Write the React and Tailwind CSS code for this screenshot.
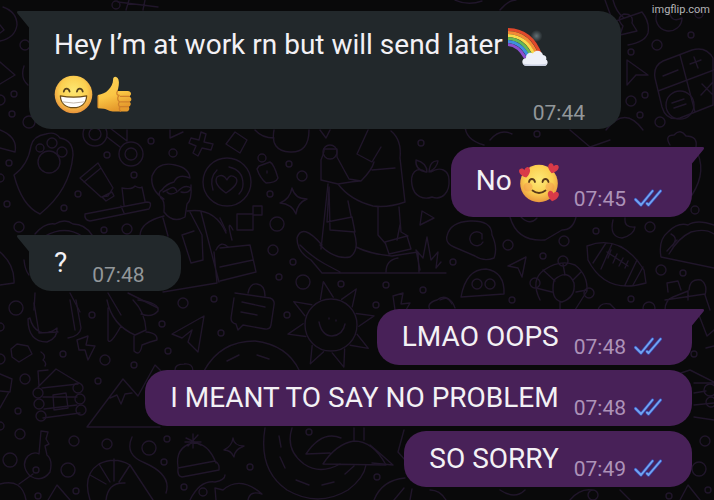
import React from 'react';
import clsx from 'clsx';

const GrinEmoji = () => (
  <svg viewBox="0 0 40 40" className="inline-block w-[39px] h-[39px] align-middle" role="img" aria-label="Grinning face">
    <defs>
      <radialGradient id="grin-face" cx="0.5" cy="0.4" r="0.6">
        <stop offset="0" stopColor="#fde873" />
        <stop offset="0.6" stopColor="#fbcf50" />
        <stop offset="1" stopColor="#e8923a" />
      </radialGradient>
    </defs>
    <circle cx="20" cy="20" r="19.3" fill="url(#grin-face)" />
    <path d="M10 17c.8-4.2 5-4.2 6 0M23.500 17c.8-4.200 5-4.200 6 0" fill="none" stroke="#54401c" strokeWidth="1.8" strokeLinecap="round" />
    <path d="M6.500 21.500Q20 24 33.500 21.500C33 29.500 27.500 33.500 20 33.500S7 29.500 6.500 21.500Z" fill="#fff" stroke="#6b4c18" strokeWidth="1.300" strokeLinejoin="round" />
    <path d="M8.500 27.500Q20 30 31.500 27.500" fill="none" stroke="#b9ada0" strokeWidth="0.9" />
  </svg>
);

const ThumbEmoji = () => (
  <svg viewBox="0 0 40 40" className="inline-block w-[39px] h-[39px] ml-1 align-middle" role="img" aria-label="Thumbs up">
    <defs>
      <linearGradient id="thumb-skin" x1="0" y1="0" x2="0.3" y2="1">
        <stop offset="0" stopColor="#fcd257" />
        <stop offset="0.6" stopColor="#fbc645" />
        <stop offset="1" stopColor="#e59a2c" />
      </linearGradient>
    </defs>
    <path d="M1 20.500C5 20 9 18.500 11.500 15.500C14.500 12 16.500 9 16.500 4.500C16.500 1 20.500.8 22 4.500C23.200 8 22 13 21 16.500H31.500C35.500 16.500 36 21 33 22C36 23 36 27 33 27.500C35.500 28.500 35 32 32.500 32.500C34 34 33 37.500 30 37.500H18C13 37.500 11 35 7 34.500L1 34Z" fill="url(#thumb-skin)" />
    <path d="M33 22H24M33 27.500H24M32.500 32.500H24M21 16.500C19.500 19 20.500 20.500 22.500 21C20.500 23.500 21 26 23 27.500C21.500 29.500 21.700 31.500 23.500 32.500C22.500 34.500 23 36 24 37" fill="none" stroke="#d0802a" strokeWidth="1.300" strokeLinecap="round" />
    <path d="M1 21V33.500" stroke="#d58a2c" strokeWidth="1.200" />
  </svg>
);

const RainbowEmoji = () => (
  <svg viewBox="0 0 40 40" className="inline-block w-10 h-10 -ml-0.5 align-middle" role="img" aria-label="Rainbow">
    <defs>
      <radialGradient id="rainbow-sun">
        <stop offset="0" stopColor="#8fa0a6" stopOpacity="0.6" />
        <stop offset="1" stopColor="#8fa0a6" stopOpacity="0" />
      </radialGradient>
    </defs>
    <circle cx="28.500" cy="9" r="6" fill="url(#rainbow-sun)" />
    <g fill="none" strokeWidth="3.2">
      <path d="M0 2.500C16 3 27 12 32.500 28" stroke="#e0482b" />
      <path d="M0 5.500C14 6 24 14 29.500 29" stroke="#f48a35" />
      <path d="M0 8.500C12 9 21.500 16 26.500 29" stroke="#f9d94c" />
      <path d="M0 11.500C10 12 18.500 18 23.500 30" stroke="#67b854" />
      <path d="M0 14.500C9 15 15.500 20 20.500 30" stroke="#3f8fe0" />
      <path d="M0 17.500C7 18 13 23 17.500 31" stroke="#8b4fd0" />
    </g>
    <path d="M18.500 39C13 38.500 13 31.500 18 31C18 26 22.500 25 25 26.500C27 22 34 23 35 28C39 28.500 38.500 32 38 32.500C41 34.500 39.500 39 36 39Z" fill="#eef0f8" />
    <path d="M15 36.500Q16 39 18.500 39H36Q38.500 39 39 36.500Q35 37.500 27 37.500T15 36.500Z" fill="#c9cfe0" />
  </svg>
);

const heart = 'M0 5C-7 1-6-4.500-3-4.500C-1.300-4.500-.3-3.500 0-2.300C.5-3.500 1.500-4.500 3-4.500C6-4.500 7 1 0 5Z';

const LoveEmoji = () => (
  <svg viewBox="0 0 40 40" className="inline-block w-10 h-10 align-middle" role="img" aria-label="Smiling face with hearts">
    <defs>
      <radialGradient id="love-face" cx="0.5" cy="0.4" r="0.6">
        <stop offset="0" stopColor="#fdea78" />
        <stop offset="0.6" stopColor="#fbd052" />
        <stop offset="1" stopColor="#e9983e" />
      </radialGradient>
    </defs>
    <circle cx="20" cy="20.500" r="18.800" fill="url(#love-face)" />
    <circle cx="9" cy="24" r="4.500" fill="#f2814a" opacity="0.35" />
    <circle cx="31" cy="24" r="4.500" fill="#f2814a" opacity="0.35" />
    <path d="M10 19c.8-4 5-4 6 0M23.500 19c.8-4 5-4 6 0M13.500 27.500Q20 32.500 26.500 27.500" fill="none" stroke="#5a3a1a" strokeWidth="1.800" strokeLinecap="round" />
    <g fill="#d93a48">
      <path d={heart} transform="translate(6 9.500) rotate(-14) scale(1.050)" />
      <path d={heart} transform="translate(34 5.500) rotate(16)" />
      <path d={heart} transform="translate(34 33) rotate(10) scale(1.050)" />
    </g>
  </svg>
);

const Ticks = () => (
  <svg viewBox="0 0 28 18" className="w-7 h-[18px] mb-1" role="img" aria-label="Read">
    <g fill="none" strokeLinecap="round" strokeLinejoin="round">
      <path d="M1.500 10.500L7 16L18.500 2M13 14.500L14.500 16L26.500 2" stroke="#3a4bb0" strokeWidth="3.200" />
      <path d="M1.500 10.500L7 16L18.500 2M13 14.500L14.500 16L26.500 2" stroke="#72a5f2" strokeWidth="1.900" />
    </g>
  </svg>
);

// [cx, cy, r]
const dots = [
  [116, 5, 4], [25, 45, 5], [14, 94, 3], [0, 100, 5], [12, 114, 3], [29, 122, 6], [9, 163, 3], [0, 178, 4],
  [151, 141, 3], [107, 155, 3], [173, 153, 4], [134, 175, 3], [78, 194, 3], [64, 208, 3], [7, 204, 3],
  [19, 227, 5], [104, 230, 3], [127, 229, 5], [183, 303, 5], [214, 299, 3], [289, 164, 3], [302, 176, 5],
  [270, 194, 3], [277, 224, 7], [273, 250, 5], [293, 262, 3], [279, 277, 3], [303, 282, 7], [341, 284, 3],
  [386, 285, 3], [423, 290, 3], [376, 305, 3], [421, 143, 3], [453, 262, 3], [508, 245, 5], [543, 256, 3],
  [564, 241, 5], [596, 231, 3], [650, 227, 5], [661, 270, 5], [683, 273, 3], [512, 300, 3], [631, 299, 3],
  [649, 308, 6], [631, 52, 3], [657, 45, 5], [691, 35, 3], [699, 14, 4], [631, 101, 5], [645, 95, 3],
  [660, 122, 5], [640, 115, 3], [537, 134, 3], [695, 210, 4], [16, 308, 7], [0, 327, 4], [92, 315, 3],
  [162, 324, 3], [168, 351, 3], [221, 333, 3], [63, 354, 3], [105, 360, 5], [134, 365, 3],
  [25, 379, 5], [0, 359, 5], [98, 381, 3], [18, 411, 3], [0, 426, 4], [20, 434, 5], [10, 460, 7],
  [74, 441, 5], [107, 444, 5], [68, 470, 7], [149, 448, 7], [167, 439, 3], [164, 462, 3], [76, 491, 3],
  [38, 496, 3], [184, 487, 3], [203, 492, 4], [250, 467, 3], [309, 432, 3], [377, 477, 3], [287, 315, 3],
  [694, 354, 3], [705, 441, 5], [699, 469, 7], [708, 490, 3], [593, 495, 5], [669, 496, 3],
];

const sunRays = [-10, 35, 78, 122, 163, 208, 258, 302];

const Wallpaper = () => (
  <svg
    viewBox="0 0 714 500"
    preserveAspectRatio="xMidYMin slice"
    className="absolute inset-0 w-full h-full"
    fill="none"
    stroke="#20162a"
    strokeWidth="1.400"
    strokeLinecap="round"
    strokeLinejoin="round"
    aria-hidden="true"
  >
    {dots.map(([cx, cy, r], i) => (
      <circle key={i} cx={cx} cy={cy} r={r} />
    ))}

    {/* top edge and left border */}
    <path d="M3 7Q17 12 17 25Q15 38 0 41M0 25L4 30L0 33M0 62L15 75L0 84M24 66Q20 78 28 85M0 130Q18 137 15 152L0 148" />
    <path d="M129 0L126 10M145 0L143 10M118 2L158 7M500 10Q508 0 516 0M455 0Q468 6 482 1" />
    <path d="M605 0L613 22L642 12Q650 22 648 33Q645 42 628 45M613 0Q616 12 624 18M620 35L623 26Q615 18 624 14Q634 14 632 23L637 31Z" />
    <path d="M657 13A13 13 0 1 0 682 18Q670 24 669 9" />

    {/* cursor and calculator */}
    <path d="M627 60L648 75L636 75L627 85Z" />
    <path d="M663 61L692 50Q706 46 713 58V105L680 118Q666 121 662 107L655 78Q653 66 663 61ZM680 55L695 112M658 91L714 70M663 76L678 70M690 64L701 60M694 57L698 68M702 84L712 94M713 82L701 95M672 103L684 99M674 108L686 104" />
    <circle cx="680" cy="105" r="14" />
    <path d="M606 130Q625 105 643 130M670 145Q664 135 674 135Q680 128 686 136Q698 136 696 147M695 148Q708 170 692 195" />
    <path d="M570 130L590 147L610 140M484 145Q465 140 465 125M490 140Q500 128 512 134" />

    {/* paw guitar pick, reel, toothpaste and brush */}
    <path d="M14 175Q28 165 31 146Q33 136 46 134Q55 131 60 138Q73 140 73 155Q70 190 40 214Q22 206 14 175Z" />
    <circle cx="40" cy="148" r="4" /><circle cx="52" cy="143" r="5" /><circle cx="62" cy="152" r="5" /><circle cx="49" cy="162" r="11" />
    <circle cx="95" cy="134" r="12" /><circle cx="95" cy="134" r="6" />
    <circle cx="131" cy="154" r="12" /><circle cx="131" cy="154" r="6" />
    <path d="M107 137L120 147M110 128L127 141V130M170 130V138L183 132" />
    <path d="M80 178L98 163L113 188L108 196L101 197ZM84 182L101 168M102 197L112 192L114 196L106 201Z" />
    <path d="M85 214L147 202Q153 202 149 209L90 221Q84 220 85 214ZM124 205L122 188Q132 190 135 186Q140 189 142 187L145 201M121 206L124 213" />
    <path d="M201 132L206 134L204 142L213 144L211 150L202 148L198 156L193 153L196 146L189 143L191 138L199 140Z" />
    <path d="M226 144L235 132L247 140L240 153Z" />

    {/* reader with glasses */}
    <path d="M164 199Q150 190 152 176Q158 161 175 165Q189 168 190 178Q178 173 174 182Q166 184 162 190Q157 192 161 198Q165 200 164 212Q173 224 185 217L187 204Q192 200 191 185M163 192L169 189Q175 185 177 192Q170 196 167 192M178 191Q185 184 191 188Q189 194 181 192" />
    <path d="M164 216Q140 222 140 236M187 211Q215 207 226 233M190 212L202 235M163 218L168 236M202 235L203 260L191 263L182 235L194 231M217 283L163 292M217 283L214 252M201 212L219 282M216 250Q221 240 228 247M233 230Q226 217 232 240" />
    <path d="M35 234Q45 222 55 224Q65 218 73 224Q85 224 92 235M45 236Q65 225 82 236M24 260Q25 270 29 275M0 252Q15 265 14 283L0 285M35 293L34 310M70 293L80 312M108 293L121 315M128 293L158 308" />

    {/* coffee, tag, sparkle, blocks */}
    <circle cx="227" cy="182" r="24" />
    <path d="M229 167Q243 170 243 184Q243 190 239 194M217 170Q209 178 213 190M226 193Q213 184 217 177Q223 173 227 180Q230 173 236 178Q240 184 226 193Z" />
    <path d="M259 166L270 162Q274 164 278 178Q276 183 266 183Q260 178 257 169ZM267 171L267 173" />
    <circle cx="262" cy="158" r="4" />
    <path d="M292 188Q295 199 307 199Q297 203 296 214Q292 204 280 203Q290 199 292 188Z" />
    <path d="M237 214H253V230H237ZM253 206H262V215H253ZM255 130Q262 138 274 138M274 130Q270 151 290 152Q309 153 309 130M320 130L326 138L330 130" />
    <path d="M220 248L250 245L256 272L220 281M220 267L253 260M220 218L226 231" />

    {/* hiker */}
    <path d="M368 130L357 154L372 162L381 147M391 131Q402 140 400 158L405 202Q388 208 373 206Q350 200 338 184L321 180V160Q325 150 324 149M324 149H337V157L349 179L361 181Q372 170 374 162M372 170L395 168M338 184Q355 181 361 181M328 184L321 249" />
    <circle cx="330" cy="152" r="7" />
    <path d="M329 187L327 222L352 217L355 232L330 230ZM348 201L351 216M378 207V235L385 243M399 207L401 232L408 236M385 242L407 236L411 249L389 254ZM322 245Q302 222 297 238Q297 252 311 260L322 273H446M320 245Q335 260 350 257Q360 250 354 232M300 245Q312 257 325 264L340 272M356 247Q370 254 392 256M392 256L418 252L419 272M386 272Q386 260 398 258M420 270L416 250L423 258L427 237L431 260L438 252L436 268L441 262" />
    <path d="M426 172C416 165 410 174 412 185C414 197 424 200 432 197C442 201 450 192 449 180C449 170 440 166 431 172M426 172Q415 170 416 160Q427 163 427 172M429 172Q430 160 438 161Q437 168 429 172M422 211L434 218L420 225Z" />

    {/* pear badge, ghost, turtle, football, taco */}
    <path d="M447 236Q450 222 470 221Q492 220 492 235Q498 248 494 258Q484 262 475 256L454 247Q445 243 447 236ZM482 234A7 7 0 1 0 483 242M482 234V239" />
    <path d="M508 266L526 257L522 277L518 268Z" />
    <path d="M461 297Q466 269 486 269Q505 272 504 294Z" />
    <circle cx="477" cy="284" r="5" /><circle cx="490" cy="284" r="5" />
    <path d="M510 217Q517 242 545 240L562 230Q573 230 576 217M521 217Q530 226 537 218" />
    <path d="M540 300Q530 280 544 270Q560 259 575 265Q588 275 587 291L575 310M554 280Q568 268 574 283Q576 297 562 302Q550 300 554 280ZM563 264L565 275M581 272L573 280M587 290L576 292M543 270L555 281M536 288L552 292M560 302V310" />
    <circle cx="563" cy="261" r="5" /><circle cx="535" cy="283" r="5" /><circle cx="589" cy="293" r="5" />
    <path d="M587 246Q621 233 644 270L646 283Q606 295 588 260ZM593 263L606 243M601 269L612 244M625 285L637 260M633 285L643 267M607 252L628 266M611 250L608 258M617 254L613 263M623 258L619 266M628 261L625 268" />
    <path d="M613 220Q609 237 622 238Q634 235 635 227Q624 228 625 218" />
    <path d="M714 268L661 257Q658 240 668 232Q678 222 688 225Q697 219 714 225M669 254Q678 238 691 232Q705 228 714 234M671 234Q679 238 672 246M667 251L677 240M665 310Q665 300 673 297L688 291V300M668 292L667 283L678 281L681 290M689 290Q690 278 701 280Q708 285 705 295L710 310M665 300L705 294" />
    <path d="M400 225L397 240M440 300Q450 294 455 308M598 310Q600 302 610 304L616 310" />

    {/* tank top, banana, rocket, plane */}
    <path d="M34 303L39 333M76 300L81 328Q80 336 68 338M70 300L75 330M39 333L58 332M28 319Q28 342 47 342Q58 338 57 328Q48 335 40 332Q32 328 30 318Z" />
    <path d="M107 300Q112 325 135 335L146 330Q145 312 133 300M108 308L108 340Q110 346 121 326M138 300Q160 303 158 311Q152 318 141 314M134 336L134 351Q140 357 142 345L150 342L157 340Q158 333 146 332" />
    <path d="M172 334L204 316L198 352L188 342L192 330L182 338ZM77 340L88 336L86 345L95 346L88 360L85 350L79 350ZM11 349L17 344L28 346L32 354L19 362L12 357ZM41 352Q47 356 43 360Q47 363 45 366" />

    {/* cabin */}
    <path d="M39 386L38 371L48 370M38 387L56 369L79 383M42 388L78 384M43 397H77M44 409L77 405M43 418L80 413M53 395L66 393L68 408L54 410ZM0 374L12 379L10 392L0 391M0 408L9 392" />
    <circle cx="38" cy="393" r="5" /><circle cx="39" cy="404" r="5" /><circle cx="41" cy="416" r="5" />
    <circle cx="78" cy="388" r="5" /><circle cx="80" cy="399" r="5" /><circle cx="81" cy="410" r="5" />

    {/* mountains */}
    <path d="M160 427H87L123 379L138 396L155 365L162 372M110 398L117 395L121 404L125 394L132 393M175 370Q175 364 184 364Q193 363 193 371" />

    {/* key, prawn, hat */}
    <path d="M39 454L41 431L48 432L46 439L49 444L45 446L47 455Q53 460 50 472Q42 483 30 476Q20 465 28 456Q34 451 39 454ZM33 474L19 484M0 484Q22 478 26 500" />
    <circle cx="36" cy="470" r="3" />
    <path d="M90 500Q82 475 99 464Q115 456 130 465L153 500M90 475L106 484M99 464L110 482M114 459V481M130 465L119 482M106 500Q108 482 125 483M132 437Q124 455 145 463Q172 475 166 493M48 500L57 485L70 500" />
    <path d="M178 467Q175 448 192 443Q208 442 216 463M178 468L215 461Q220 464 219 470L182 477Q177 476 178 468ZM186 438L201 445M188 446L198 435M193 434V448M185 442H201" />
    <path d="M233 438Q234 446 244 446Q234 450 234 457Q231 450 224 450Q232 446 233 438ZM190 500Q200 480 215 482Q225 480 225 475M216 500L215 488L223 490Q240 475 262 494Q250 490 248 500" />

    {/* chat tag and sun */}
    <path d="M235 293L270 298Q275 300 274 305L271 325Q270 330 265 329L243 325L238 330L236 324Q231 323 231 318L234 298M248 293Q250 283 257 284Q265 285 265 296M242 302L265 307M241 312L257 315" />
    <circle cx="331" cy="325" r="26" />
    {sunRays.map((deg) => (
      <path key={deg} d="M325 298L331 281L338 298" transform={`rotate(${deg} 331 325)`} />
    ))}
    <path d="M319 322Q322 336 332 336Q343 335 345 324M329 318V319M336 320V321" />

    {/* vinyl and umbrella */}
    <path d="M204 371Q220 341 255 341Q287 345 299 370M227 361L239 355M257 355L269 359M265 428Q258 470 287 490Q318 508 348 490Q364 478 366 465M279 436L281 447M280 457L285 468M296 480L309 485M322 485L334 482M345 474L354 466M292 428Q285 450 304 464Q320 475 340 464M323 464L386 465Q373 441 354 441Q336 444 323 464ZM306 454L330 453M306 454Q322 430 341 438M354 440V428M364 440V428" />

    {/* right side */}
    <path d="M675 375L690 370L714 382M694 383H714M694 393L706 391M694 405L714 403M694 417L714 420M697 310L707 336L714 330M706 348L714 346M370 445Q382 455 393 465L372 463M404 430L398 452L405 460M374 500Q382 480 405 478M394 500L404 488M412 489L410 500M430 490Q440 490 446 500M500 490Q515 500 525 490M570 500Q580 488 592 490M620 490L630 500M680 500L688 485L700 500" />
    <circle cx="710" cy="390" r="6" /><circle cx="711" cy="402" r="5" />
    <path d="M393 296L403 293L401 304L410 303L406 310M395 310L393 296M430 310Q426 303 437 300Q446 293 452 304" />
  </svg>
);

const Bubble = ({ side = 'out', tail, wide, media, time, children }) => {
  const out = side === 'out';
  return (
    <div
      className={clsx(
        'relative flex pl-[25px] pt-2.5 rounded-[22px]',
        out ? 'self-end bg-[#482158] pr-[30px] pb-1.5' : 'self-start bg-[#22282b] pr-9 pb-1',
        wide ? 'w-full max-w-[592px] flex-col' : 'items-end',
        !wide && (out ? 'gap-[15px]' : 'gap-[25px]'),
        tail && (out ? 'rounded-tr-none' : 'rounded-tl-none')
      )}
    >
      {tail && (
        <svg
          viewBox="0 0 14 18"
          className={clsx('absolute top-0 w-3.5 h-[18px]', out ? '-right-[13px] -scale-x-100' : '-left-[13px]')}
          fill={out ? '#482158' : '#22282b'}
          aria-hidden="true"
        >
          <path d="M14 0H2.500Q0 .4 1.500 2.500L13 16.500L14 18Z" />
        </svg>
      )}
      <p
        className={clsx(
          'text-[28px] text-[#f3f1f5]',
          media ? 'leading-[48px]' : 'leading-9',
          media && (out ? 'mb-1.5' : 'mb-2'),
          !media && (out ? 'mb-1' : 'mb-1.5')
        )}
      >
        {children}
      </p>
      <div className={clsx('flex items-end gap-2', wide && 'self-end -mt-6')}>
        <time className={clsx('text-[21px] leading-6', out ? 'text-[#ad93b8]' : 'text-[#92979a]')}>{time}</time>
        {out && <Ticks />}
      </div>
    </div>
  );
};

const App = () => (
  <main className="relative min-h-screen bg-[#09090a] font-[Roboto,sans-serif] overflow-hidden">
    <Wallpaper />
    <div className="relative flex flex-col gap-[18px] pt-[11px] pb-3 pl-[29px] pr-[22px]">
      <Bubble side="in" tail wide media time="07:44">
        Hey I’m at work rn but will send later <RainbowEmoji />
        <br />
        <GrinEmoji />
        <ThumbEmoji />
      </Bubble>
      <Bubble tail media time="07:45">
        No <LoveEmoji />
      </Bubble>
      <Bubble side="in" tail time="07:48">?</Bubble>
      <div className="flex flex-col gap-[5px]">
        <Bubble tail time="07:48">LMAO OOPS</Bubble>
        <Bubble time="07:48">I MEANT TO SAY NO PROBLEM</Bubble>
        <Bubble time="07:49">SO SORRY</Bubble>
      </div>
    </div>
    <span className="absolute top-0.5 right-1 text-[11px] leading-4 text-[#b4b4b6]">imgflip.com</span>
  </main>
);

export default App;
